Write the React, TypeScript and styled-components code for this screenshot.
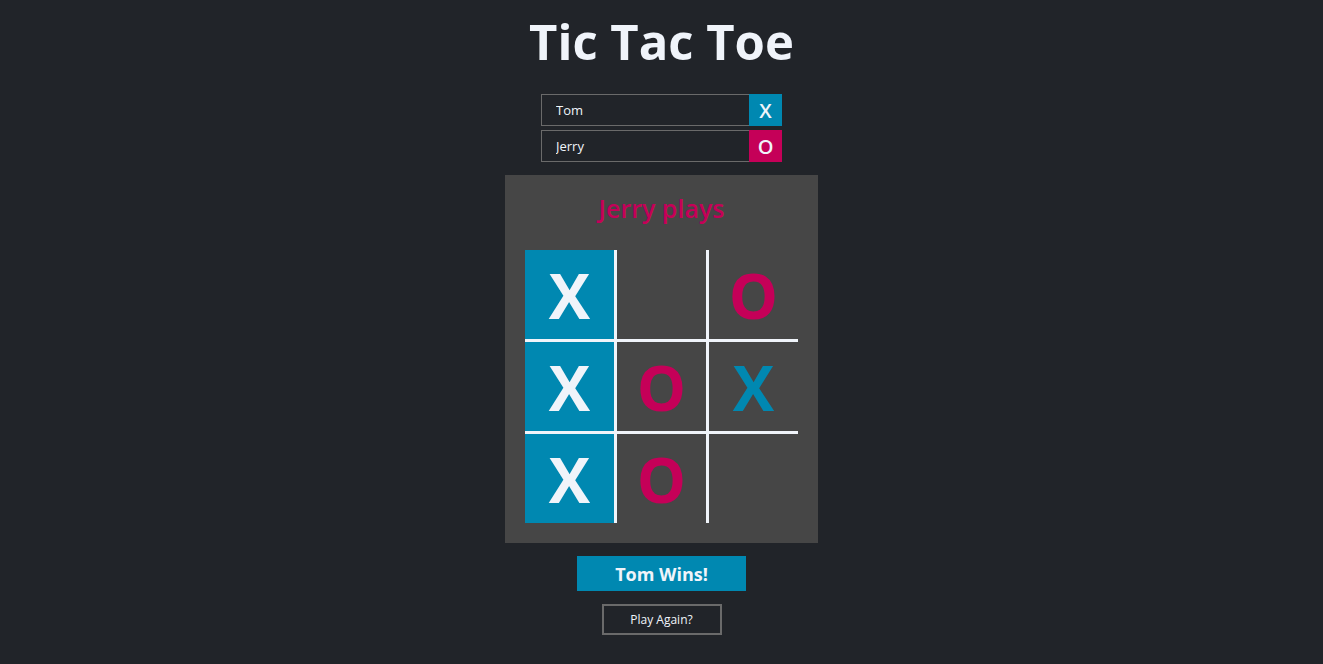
import React from "react";
import styled, { createGlobalStyle } from "styled-components";

const Global = createGlobalStyle`
  html, body { margin: 0; padding: 0; background: #212429; }
  body { font-family: "Open Sans", "Noto Sans", sans-serif; color: #f0f4fa; }
  * { box-sizing: border-box; }
`;

const BLUE = "#0088b1";
const PINK = "#c50058";

const Page = styled.div`
  display: flex;
  flex-direction: column;
  align-items: center;
  min-height: 664px;
  padding-top: 10px;
`;

const Title = styled.h1`
  margin: 0;
  font-size: 49px;
  line-height: 62px;
  font-weight: 700;
  color: #f0f4fa;
`;

const Players = styled.div`
  display: flex;
  flex-direction: column;
  gap: 4px;
  margin-top: 22px;
`;

const PlayerRow = styled.div`
  display: flex;
  height: 32px;
`;

const NameInput = styled.input`
  width: 208px;
  height: 32px;
  background: #212429;
  border: 1px solid #6a6a6a;
  border-right: none;
  color: #f0f4fa;
  font-family: "Open Sans", sans-serif;
  font-size: 13px;
  padding: 0 0 0 14px;
  outline: none;
`;

const Tag = styled.div<{ $color: string }>`
  width: 33px;
  height: 32px;
  background: ${(p) => p.$color};
  color: #f0f4fa;
  display: flex;
  align-items: center;
  justify-content: center;
  font-size: 20px;
  font-weight: 600;
`;

const Panel = styled.div`
  margin-top: 13px;
  width: 313px;
  background: #464646;
  padding: 15px 20px 20px;
  display: flex;
  flex-direction: column;
  align-items: center;
`;

const Status = styled.div`
  color: ${PINK};
  font-size: 25px;
  font-weight: 600;
  line-height: 36px;
  height: 36px;
  margin-bottom: 24px;
`;

const Board = styled.div`
  display: grid;
  grid-template-columns: 92px 92px 89px;
  grid-template-rows: 92px 92px 89px;
`;

const Cell = styled.div<{ $win: boolean; $mark: string; $right: boolean; $bottom: boolean }>`
  display: flex;
  align-items: center;
  justify-content: center;
  background: ${(p) => (p.$win ? BLUE : "transparent")};
  border-right: ${(p) => (p.$right ? "3px solid #f0f4fa" : "none")};
  border-bottom: ${(p) => (p.$bottom ? "3px solid #f0f4fa" : "none")};
  color: ${(p) => (p.$win ? "#f0f4fa" : p.$mark === "X" ? BLUE : PINK)};
  font-size: 62px;
  font-weight: 700;
  line-height: 1;
`;

const Result = styled.div`
  margin-top: 13px;
  width: 169px;
  height: 35px;
  background: ${BLUE};
  color: #f0f4fa;
  font-size: 18px;
  font-weight: 700;
  display: flex;
  align-items: center;
  justify-content: center;
`;

const Again = styled.button`
  margin-top: 13px;
  width: 120px;
  height: 31px;
  background: transparent;
  border: 2px solid #6a6a6a;
  color: #f0f4fa;
  font-family: "Open Sans", sans-serif;
  font-size: 12px;
  font-weight: 500;
  cursor: pointer;
`;

const cells = ["X", "", "O", "X", "O", "X", "X", "O", ""];
const wins = [0, 3, 6];

export default function App() {
  return (
    <>
      <Global />
      <Page>
        <Title>Tic Tac Toe</Title>
        <Players>
          <PlayerRow>
            <NameInput defaultValue="Tom" />
            <Tag $color={BLUE}>X</Tag>
          </PlayerRow>
          <PlayerRow>
            <NameInput defaultValue="Jerry" />
            <Tag $color={PINK}>O</Tag>
          </PlayerRow>
        </Players>
        <Panel>
          <Status>Jerry plays</Status>
          <Board>
            {cells.map((c, i) => (
              <Cell
                key={i}
                $mark={c}
                $win={wins.includes(i)}
                $right={i % 3 !== 2}
                $bottom={i < 6}
              >
                {c}
              </Cell>
            ))}
          </Board>
        </Panel>
        <Result>Tom Wins!</Result>
        <Again>Play Again?</Again>
      </Page>
    </>
  );
}
